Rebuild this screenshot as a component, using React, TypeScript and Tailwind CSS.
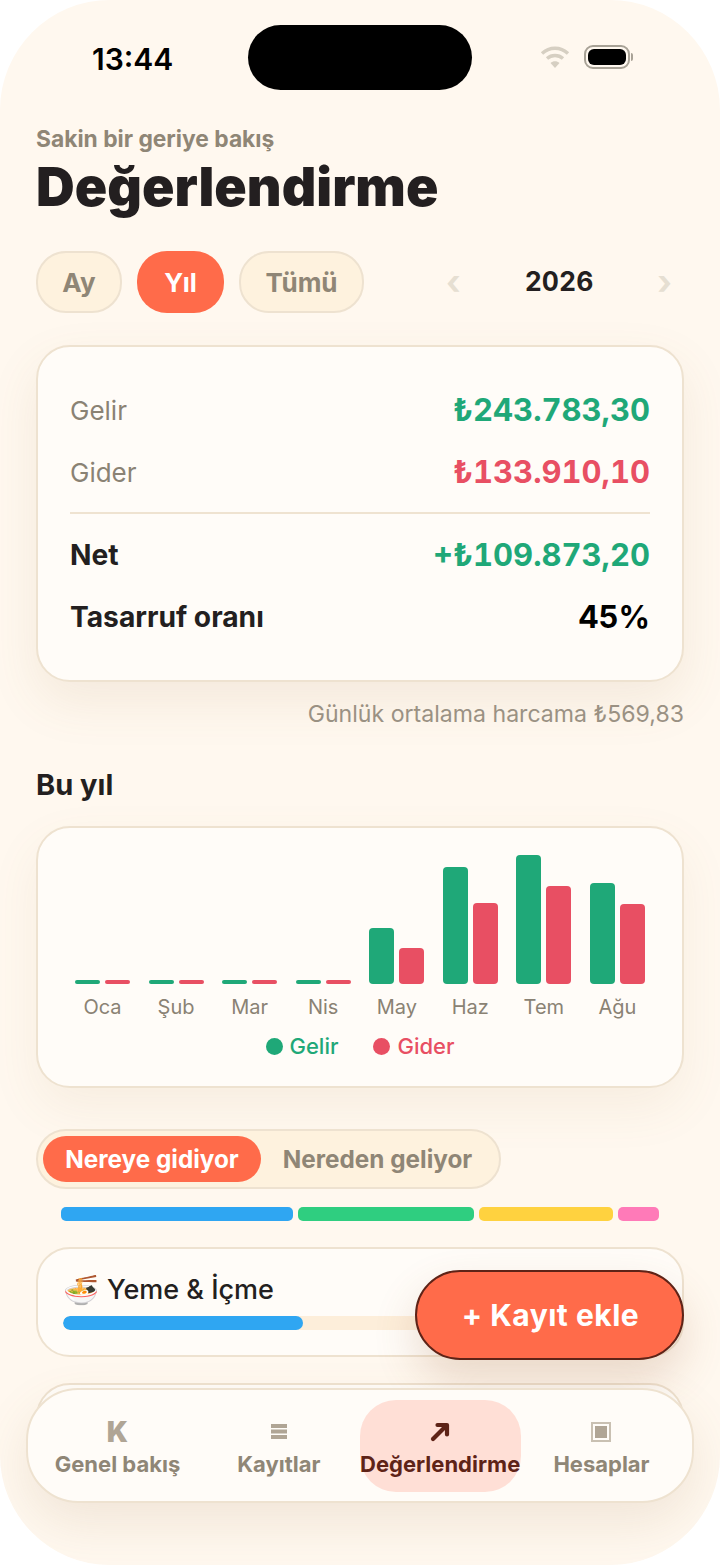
import React from 'react';

const months = [
  { label: 'Oca', income: 4, expense: 4 },
  { label: 'Şub', income: 4, expense: 4 },
  { label: 'Mar', income: 4, expense: 4 },
  { label: 'Nis', income: 4, expense: 4 },
  { label: 'May', income: 56, expense: 36 },
  { label: 'Haz', income: 117, expense: 81 },
  { label: 'Tem', income: 129, expense: 98 },
  { label: 'Ağu', income: 101, expense: 80 },
];

const cardClass = 'bg-[#fffcf8] border-2 border-[#eee2d0] rounded-[34px]';

const WifiIcon = () => (
  <svg width="30" height="24" viewBox="0 0 30 24" fill="none" stroke="#d6cfc2" strokeWidth="3.4">
    <path d="M2 8.5C9.5 1.5 20.5 1.5 28 8.5" />
    <path d="M7 13.5C11.5 9.5 18.5 9.5 23 13.5" />
    <path d="M15 23L10.5 18C13 15.8 17 15.8 19.5 18Z" fill="#d6cfc2" stroke="none" />
  </svg>
);

const BatteryIcon = () => (
  <div className="flex items-center gap-[1px]">
    <div className="w-[46px] h-[24px] rounded-[9px] border-2 border-[#a8a296] p-[2px]">
      <div className="w-full h-full rounded-[6px] bg-black" />
    </div>
    <div className="w-[2px] h-[8px] rounded-r-sm bg-[#a8a296]" />
  </div>
);

const ListIcon = () => (
  <svg width="16" height="15" viewBox="0 0 16 15" fill="#b0a595">
    <rect x="0" y="0" width="16" height="4" />
    <rect x="0" y="5.5" width="16" height="4" />
    <rect x="0" y="11" width="16" height="4" />
  </svg>
);

const ArrowIcon = () => (
  <svg width="20" height="20" viewBox="0 0 20 20" fill="none" stroke="#5e2317" strokeWidth="4.2" strokeLinecap="round" strokeLinejoin="round">
    <path d="M3 17L15.5 4.5" />
    <path d="M7.5 3H17V12.5" />
  </svg>
);

const AccountsIcon = () => (
  <div className="w-[20px] h-[20px] border-2 border-[#c9c0b2] p-[2px]">
    <div className="w-full h-full bg-[#b0a595]" />
  </div>
);

const SummaryRow = ({ label, value, valueClass, strong }: { label: string; value: string; valueClass: string; strong?: boolean }) => (
  <div className="flex items-center justify-between h-[40px]">
    <span className={strong ? 'text-[28.2px] font-bold text-[#231f20]' : 'text-[26px] text-[#8a8274]'}>{label}</span>
    <span className={`text-[31px] font-bold tabular-nums ${valueClass}`}>{value}</span>
  </div>
);

const TabItem = ({ icon, label, active }: { icon: React.ReactNode; label: string; active?: boolean }) => (
  <div className={`flex flex-col items-center justify-center w-[161px] h-[92px] pt-[8px] rounded-[36px] ${active ? 'bg-[#ffdfd6]' : ''}`}>
    <div className="h-[28px] flex items-center justify-center">{icon}</div>
    <span className={`text-[22px] font-bold leading-[36px] whitespace-nowrap ${active ? 'text-[#5e2317]' : 'text-[#8f8676]'}`}>{label}</span>
  </div>
);

export default function App() {
  return (
    <div className="relative w-[720px] h-[1565px] overflow-hidden bg-white font-['Inter',sans-serif]">
      <div className="relative w-full h-full overflow-hidden rounded-[110px] bg-[#fff8ef]">
        {/* status bar */}
        <div className="flex items-start justify-between h-[117px] pt-[25px] pl-[92px] pr-[87px]">
          <span className="w-[156px] mt-[16px] text-[30px] leading-[36px] font-semibold text-black">13:44</span>
          <div className="w-[224px] h-[65px] rounded-[33px] bg-black" />
          <div className="flex items-center gap-[14px] ml-auto mt-[20px]">
            <WifiIcon />
            <BatteryIcon />
          </div>
        </div>

        <main className="px-[36px]">
          <p className="text-[22.8px] leading-[26px] mt-[9px] font-bold text-[#8f8676]">Sakin bir geriye bakış</p>
          <h1 className="text-[53.6px] leading-[60px] mt-[5px] font-black text-[#231f20]">Değerlendirme</h1>

          <div className="flex items-center mt-[34px]">
            <div className="flex gap-[15px]">
              <div className="flex items-center justify-center w-[86px] h-[62px] rounded-[30px] bg-[#fef2de] border-2 border-[#eee2d0] text-[26px] font-bold text-[#8f8676]">Ay</div>
              <div className="flex items-center justify-center w-[87px] h-[62px] rounded-[30px] bg-[#ff6b4a] text-[26px] font-bold text-white">Yıl</div>
              <div className="flex items-center justify-center w-[125px] h-[62px] rounded-[30px] bg-[#fef2de] border-2 border-[#eee2d0] text-[26px] font-bold text-[#8f8676]">Tümü</div>
            </div>
            <div className="flex items-center justify-between ml-auto w-[247px] pr-[12px] pl-[9px]">
              <span className="text-[34px] leading-none font-bold text-[#e6dfd2]">‹</span>
              <span className="text-[26.5px] font-bold text-[#231f20] tabular-nums">2026</span>
              <span className="text-[34px] leading-none font-bold text-[#e6dfd2]">›</span>
            </div>
          </div>

          <section className={`${cardClass} mt-[32px] h-[337px] px-[32px] pt-[43px] shadow-[0_20px_50px_rgba(150,110,60,0.10)]`}>
            <SummaryRow label="Gelir" value="₺243.783,30" valueClass="text-[#1fa878]" />
            <div className="mt-[22px]">
              <SummaryRow label="Gider" value="₺133.910,10" valueClass="text-[#e84f63]" />
            </div>
            <div className="h-[2px] bg-[#efe3d1] mt-[20px]" />
            <div className="mt-[21px]">
              <SummaryRow label="Net" value="+₺109.873,20" valueClass="text-[#1fa878]" strong />
            </div>
            <div className="mt-[22px]">
              <SummaryRow label="Tasarruf oranı" value="45%" valueClass="text-black" strong />
            </div>
          </section>

          <p className="mt-[18px] text-right text-[23.1px] leading-[28px] text-[#9a9183]">Günlük ortalama harcama ₺569,83</p>

          <h2 className="mt-[39px] text-[29px] leading-[36px] font-bold text-[#231f20]">Bu yıl</h2>

          <section className={`${cardClass} mt-[23px] h-[262px] px-[37px] shadow-[0_20px_50px_rgba(150,110,60,0.08)]`}>
            <div className="flex justify-between h-[156px] items-end">
              {months.map((m) => (
                <div key={m.label} className="flex items-end gap-[5px]">
                  <div className="w-[25px] rounded-[4px] bg-[#1fa878]" style={{ height: m.income }} />
                  <div className="w-[25px] rounded-[4px] bg-[#e84f63]" style={{ height: m.expense }} />
                </div>
              ))}
            </div>
            <div className="flex justify-between mt-[9px]">
              {months.map((m) => (
                <span key={m.label} className="w-[55px] text-center text-[20px] leading-[28px] text-[#8a8274]">{m.label}</span>
              ))}
            </div>
            <div className="flex justify-center gap-[35px] mt-[11px]">
              <div className="flex items-center gap-[7px]">
                <div className="w-[17px] h-[17px] rounded-full bg-[#1fa878]" />
                <span className="text-[22px] leading-[28px] font-medium text-[#1fa878]">Gelir</span>
              </div>
              <div className="flex items-center gap-[7px]">
                <div className="w-[17px] h-[17px] rounded-full bg-[#e84f63]" />
                <span className="text-[22px] leading-[28px] font-medium text-[#e84f63]">Gider</span>
              </div>
            </div>
          </section>

          <div className="mt-[41px] flex items-center h-[60px] w-[465px] px-[5px] rounded-[30px] bg-[#fef2de] border-2 border-[#eee2d0]">
            <div className="flex items-center justify-center w-[218px] h-[46px] rounded-[23px] bg-[#ff6b4a] text-[24.3px] font-bold text-white">Nereye gidiyor</div>
            <div className="flex-1 text-center text-[24.3px] font-bold text-[#8f8676]">Nereden geliyor</div>
          </div>

          <div className="flex gap-[5px] h-[14px] mt-[18px] mx-[25px]">
            <div className="w-[232px] rounded-[5px] bg-[#2fa6f2]" />
            <div className="w-[176px] rounded-[5px] bg-[#2fce80]" />
            <div className="w-[134px] rounded-[5px] bg-[#ffd23f]" />
            <div className="w-[41px] rounded-[5px] bg-[#ff7ab8]" />
          </div>

          <section className={`${cardClass} mt-[26px] h-[110px] px-[25px] pt-[23px]`}>
            <p className="flex items-center gap-[8px] text-[27px] leading-[36px] font-medium text-[#231f20]">
              <span className="text-[29px]">🍜</span>
              <span>Yeme &amp; İçme</span>
            </p>
            <div className="mt-[8px] h-[14px] rounded-[7px] bg-[#fdeeda] overflow-hidden">
              <div className="w-[240px] h-full rounded-[7px] bg-[#2fa6f2]" />
            </div>
          </section>

          <section className={`${cardClass} mt-[26px] h-[110px]`} />
        </main>

        {/* floating add button */}
        <div className="absolute left-[415px] top-[1270px] w-[269px] h-[90px] flex items-center justify-center pl-[2px] rounded-[45px] bg-[#ff6b4a] border-2 border-[#5e2317] text-[30px] tracking-[0.5px] font-bold text-white shadow-[0_20px_44px_rgba(150,90,50,0.2)]">
          + Kayıt ekle
        </div>

        {/* tab bar */}
        <nav className="absolute left-[26px] top-[1388px] w-[668px] h-[115px] flex items-center justify-between pl-[9px] pr-[10px] rounded-[52px] bg-[#fffcf8] border-2 border-[#eee2d0] shadow-[0_20px_50px_rgba(150,110,60,0.13)]">
          <TabItem icon={<span className="text-[28px] font-black text-[#b0a595]">K</span>} label="Genel bakış" />
          <TabItem icon={<ListIcon />} label="Kayıtlar" />
          <TabItem icon={<ArrowIcon />} label="Değerlendirme" active />
          <TabItem icon={<AccountsIcon />} label="Hesaplar" />
        </nav>
      </div>
    </div>
  );
}
